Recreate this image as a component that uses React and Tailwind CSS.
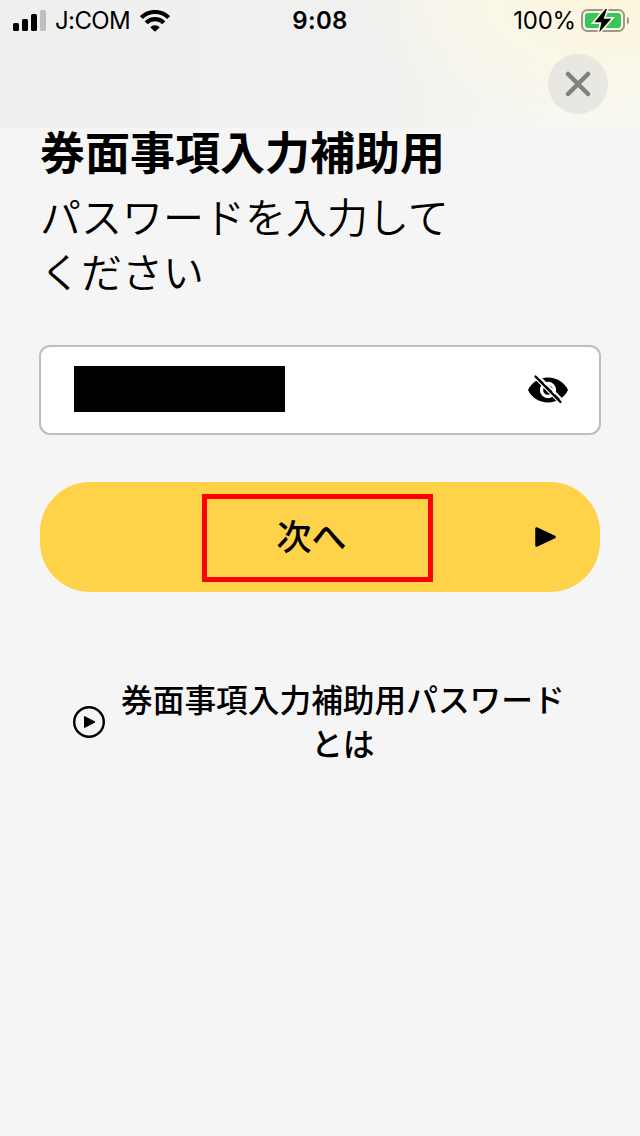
import React from 'react'

const SignalIcon = () => (
    <svg width="34" height="22" viewBox="0 0 34 22">
        <rect x="0" y="13" width="6" height="8" rx="1.5" />
        <rect x="9" y="9" width="6" height="12" rx="1.5" />
        <rect x="18" y="4" width="6" height="17" rx="1.5" />
        <rect x="27" y="0" width="6" height="21" rx="1.5" fill="#bfbfbf" />
    </svg>
)

const WifiIcon = () => (
    <svg width="30" height="22" viewBox="0 0 30 22">
        <g fill="none" stroke="#000" strokeWidth="4.2">
            <path d="M1.4 7.6a19.3 19.3 0 0 1 27.2 0" />
            <path d="M6.2 12.8a12.5 12.5 0 0 1 17.6 0" />
        </g>
        <path d="M15 21.8l-4.8-4.6a6.9 6.9 0 0 1 9.6 0z" />
    </svg>
)

const BatteryIcon = () => (
    <svg width="48" height="24" viewBox="0 0 48 24">
        <rect x="1" y="1" width="42" height="21" rx="5.5" fill="none" stroke="#9b998c" strokeWidth="2" />
        <path d="M46 8v7.5c3-1 3-6.5 0-7.5z" fill="#9b998c" />
        <rect x="4" y="4" width="36" height="15" rx="3" fill="#35c759" />
        <path d="M24.5 0 13.5 13.3h6.9L18.300 23.3 30.2 9.7h-7.6L26 0z" stroke="#fbf6e3" strokeWidth="3.5" paintOrder="stroke" />
    </svg>
)

const EyeOffIcon = () => (
    <svg width="40" height="30" viewBox="0 0 40 30">
        <path d="M0 15C3.5 7.5 11 2.5 20 2.5s16.5 5 20 12.5c-3.5 7.5-11 12.5-20 12.5S3.5 22.5 0 15z" />
        <circle cx="20" cy="15" r="6.5" fill="none" stroke="#fff" strokeWidth="3.3" />
        <path d="M8.5-1l26.5 26.5" stroke="#fff" strokeWidth="2.2" />
        <path d="M5.5 2l26 26" stroke="#fff" strokeWidth="1.5" />
        <path d="M7.5 1.5l25 25.5" stroke="#000" strokeWidth="2.3" strokeLinecap="round" />
    </svg>
)

const PlayCircleIcon = () => (
    <svg width="32" height="32" viewBox="0 0 32 32">
        <circle cx="16" cy="16" r="14.8" fill="none" stroke="#000" strokeWidth="2.4" />
        <path d="M11.5 10.5v11l10.5-5.500z" stroke="#000" strokeLinejoin="round" />
    </svg>
)

const Header = () => (
    <header className="h-32 bg-[radial-gradient(ellipse_240px_130px_at_95%_0%,#fdf6dc_0%,#faf7e8_50%,transparent_100%),linear-gradient(to_right,#efefef,#f0f0ee_60%,#f8f8f3_90%)]">
        <div className="grid grid-cols-3 h-10 pl-[13px] pr-[11px] font-['Inter'] text-[24px] leading-10">
            <div className="flex items-center">
                <SignalIcon />
                <span className="ml-2 mt-px tracking-[-0.6px]">J:COM</span>
                <span className="ml-2.5"><WifiIcon /></span>
            </div>
            <div className="-ml-0.5 text-center mt-px font-semibold tracking-[0.3px]">9:08</div>
            <div className="flex items-center justify-end">
                <span className="mt-px tracking-[-0.2px]">100%</span>
                <span className="ml-[5px]"><BatteryIcon /></span>
            </div>
        </div>
        <div className="flex justify-end pr-8 pt-3.5">
            <button aria-label="閉じる" className="flex items-center justify-center size-[60px] rounded-full bg-[#e8e7e1]">
                <svg width="26" height="26" viewBox="0 0 26 26">
                    <path d="M3 3l20 20M23 3L3 23" stroke="#808080" strokeWidth="4.5" strokeLinecap="round" />
                </svg>
            </button>
        </div>
    </header>
)

const App = () => {
    return (
        <div className="w-[640px] h-[1136px] bg-[#f5f5f5] text-black font-['Noto_Sans_CJK_JP',sans-serif] overflow-hidden">
            <Header />

            <main className="px-10">
                <h1 className="h-[60px] text-[45px] leading-[46px] font-bold whitespace-nowrap">券面事項入力補助用</h1>
                <p className="h-[157px] text-[41px] leading-[55px] font-[350]">
                    パスワードを入力して<br />ください
                </p>

                <div className="flex items-center justify-between h-[90px] -mx-px pl-8 pr-[31px] border-2 border-[#bebebe] rounded-[11px] bg-white">
                    <div className="w-[211px] h-[46px] ml-px mb-0.5 bg-black" />
                    <EyeOffIcon />
                </div>

                <button className="flex items-center w-full h-[110px] mt-[47px] pl-[162px] pr-11 rounded-[50px] bg-[#fed34a]">
                    <span className="flex items-center justify-center w-[231px] h-[88px] mt-0.5 border-[5px] border-[#ff0000] text-[35px] font-medium">
                        <span className="-ml-3 -mt-1.5">次へ</span>
                    </span>
                    <svg className="ml-auto" width="21" height="20" viewBox="0 0 21 20">
                        <path d="M1.5 1.5v17l18-8.5z" stroke="#000" strokeWidth="2.5" strokeLinejoin="round" />
                    </svg>
                </button>

                <a className="flex items-center mt-[88px] pl-[33px] gap-4">
                    <PlayCircleIcon />
                    <span className="-mt-1 text-[31.7px] leading-[44px] font-medium text-center whitespace-nowrap">
                        券面事項入力補助用パスワード<br />とは
                    </span>
                </a>
            </main>
        </div>
    )
}

export default App
